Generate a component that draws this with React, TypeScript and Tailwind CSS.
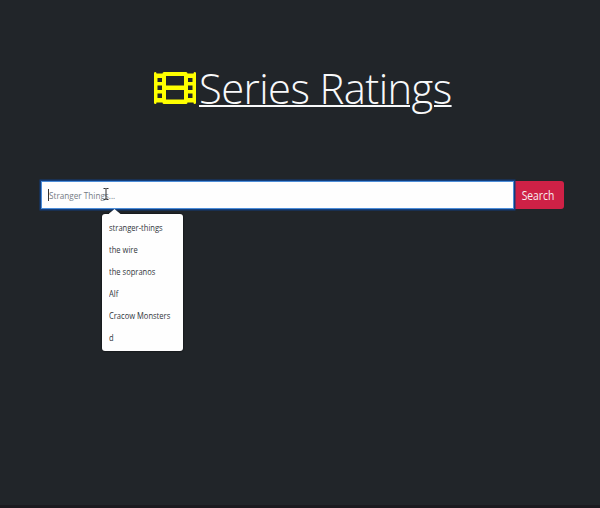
import React from "react";

const suggestions: string[] = [
  "stranger-things",
  "the wire",
  "the sopranos",
  "Alf",
  "Cracow Monsters",
  "d",
];

function FilmIcon() {
  return (
    <svg className="h-8 w-[42px] shrink-0" viewBox="0 0 42 32" fill="#ffff00" aria-hidden="true">
      <path
        fillRule="evenodd"
        d="M0 1Q0 0 1.500 0Q2.500 0 2.500 1.500H8.500Q8.500 0 10 0H32Q33.500 0 33.500 1.500H39.500Q39.500 0 40.500 0Q42 0 42 1V31Q42 32 40.500 32Q39.500 32 39.500 30.500H33.500Q33.500 32 32 32H10Q8.500 32 8.500 30.500H2.500Q2.500 32 1.500 32Q0 32 0 31Z
        M12 4V13.500H30V4ZM12 18V27.500H30V18Z
        M3.500 6V10H8V6ZM3.500 13.500V18H8V13.500ZM3.500 21.500V26H8V21.500Z
        M34 6V10H38.500V6ZM34 13.500V18H38.500V13.500ZM34 21.500V26H38.500V21.500Z"
      />
    </svg>
  );
}

function TextCursor() {
  return (
    <svg className="absolute left-[60px] top-[6px] h-3 w-2" viewBox="0 0 8 12" fill="none" stroke="#333" aria-hidden="true">
      <path d="M1.500 .5H3.500L4 1L4.500 .5H6.500M4 1V11M1.500 11.500H3.500L4 11L4.500 11.500H6.500" />
    </svg>
  );
}

function Suggestions() {
  return (
    <div className="absolute left-[60.5px] top-[33px] h-[137px] w-[81px] rounded-[3px] bg-[#fefefe] pt-[3px] shadow-[0_0_2px_#000]">
      <div className="absolute -top-[5px] left-[7px] h-[5px] w-3 bg-[#fefefe] [clip-path:polygon(50%_0,100%_100%,0_100%)]" />
      <ul>
        {suggestions.map((name) => (
          <li
            key={name}
            className="ml-[7px] h-[22px] origin-left scale-x-[0.87] whitespace-nowrap text-[8.700px] leading-[22px] text-[#30353b]"
          >
            {name}
          </li>
        ))}
      </ul>
    </div>
  );
}

export default function App() {
  return (
    <main className="flex h-[508px] w-[600px] flex-col overflow-hidden border-b-3 border-[#1b1a1f] bg-[#212529] font-['Open_Sans','Noto_Sans',sans-serif]">
      <h1 className="mt-[58px] flex h-[60px] pl-[154px] text-[#f8f9fa]">
        <span className="pt-3.5">
          <FilmIcon />
        </span>
        <span className="ml-[3px] origin-left scale-x-[0.971] whitespace-nowrap text-[43px] font-light leading-[59px] tracking-[-0.600px] underline decoration-[1.500px] underline-offset-[1px]">
          Series Ratings
        </span>
      </h1>
      <form className="relative ml-[41px] mt-[63px] flex h-7 w-[523px]" onSubmit={(e) => e.preventDefault()}>
        <div className="relative z-10 flex w-[473px] items-center border border-[#4c8dd8] bg-[#fefefe] pl-1.5 shadow-[0_0_0_1.500px_#133d7a]">
          <span className="h-3 w-px bg-[#333]" />
          <span className="mt-0.5 origin-left scale-x-[0.89] text-[9.200px] leading-none text-[#747b83]">
            Stranger Things...
          </span>
          <TextCursor />
        </div>
        <button type="submit" className="w-[50px] rounded-r-[3px] bg-[#cf2146] pt-0.5 text-[12px] text-[#f8edf0]">
          <span className="-ml-0.5 inline-block scale-x-[0.86]">Search</span>
        </button>
        <div className="absolute left-0 top-0 z-20">
          <Suggestions />
        </div>
      </form>
    </main>
  );
}
